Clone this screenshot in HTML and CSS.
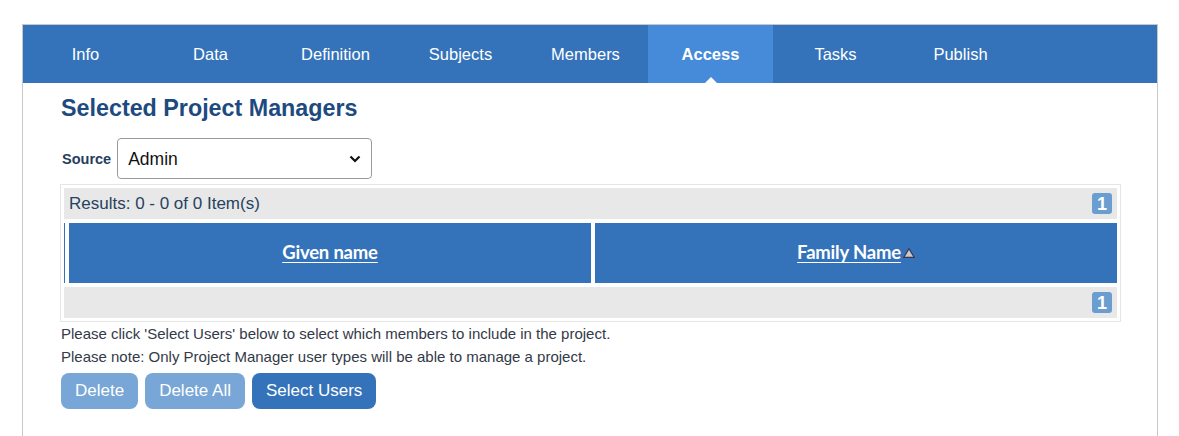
FILE: index.html
```html
<!DOCTYPE html>
<html>
<head>
<meta charset="utf-8">
<link rel="stylesheet" href="styles.css">
</head>
<body>
<div class="panel">
  <nav class="tabs">
    <div class="tab">Info</div>
    <div class="tab">Data</div>
    <div class="tab">Definition</div>
    <div class="tab">Subjects</div>
    <div class="tab">Members</div>
    <div class="tab active">Access</div>
    <div class="tab">Tasks</div>
    <div class="tab">Publish</div>
  </nav>
  <div class="content">
    <h1 class="title">Selected Project Managers</h1>
    <div class="source-row">
      <label class="source-label">Source</label>
      <div class="select-wrap">
        <select class="select"><option>Admin</option></select>
        <svg class="chev" width="12" height="8" viewBox="0 0 12 8"><path d="M1.5 1.5 L6 6 L10.5 1.5" fill="none" stroke="#111" stroke-width="2.2"/></svg>
      </div>
    </div>
    <div class="grid">
      <div class="bar">
        <span class="results">Results: 0 - 0 of 0 Item(s)</span>
        <span class="page">1</span>
      </div>
      <div class="head">
        <div class="head-stub"></div>
        <div class="head-cell"><a class="sort-link">Given name</a></div>
        <div class="head-cell"><a class="sort-link">Family Name</a><svg class="sort-icon" width="12" height="10" viewBox="0 0 12 10"><path d="M6 0.8 L11.2 9.3 L0.8 9.3 Z" fill="#c9c9c9" stroke="#3a3550" stroke-width="1.2"/></svg></div>
      </div>
      <div class="bar bar-end">
        <span class="page">1</span>
      </div>
    </div>
    <p class="note">Please click 'Select Users' below to select which members to include in the project.</p>
    <p class="note">Please note: Only Project Manager user types will be able to manage a project.</p>
    <div class="actions">
      <button class="btn disabled">Delete</button>
      <button class="btn disabled">Delete All</button>
      <button class="btn primary">Select Users</button>
    </div>
  </div>
</div>
</body>
</html>
```
FILE: styles.css
```css
html, body {
  margin: 0;
  padding: 0;
  background: #fff;
}
body {
  font-family: "Liberation Sans", Arial, sans-serif;
  padding: 24px 21px 0 22px;
  height: 436px;
  box-sizing: border-box;
  overflow: hidden;
}
.panel {
  border: 1px solid #c8c8c8;
  border-bottom: none;
  height: 420px;
}
.tabs {
  display: flex;
  height: 58px;
  background: #3473ba;
}
.tab {
  width: 125px;
  display: flex;
  align-items: center;
  justify-content: center;
  color: #fff;
  font-size: 16.5px;
  position: relative;
}
.tab.active {
  background: #468bd9;
  font-weight: bold;
}
.tab.active::after {
  content: "";
  position: absolute;
  bottom: 0;
  left: 50%;
  margin-left: -6px;
  border-left: 6px solid transparent;
  border-right: 6px solid transparent;
  border-bottom: 6px solid #fff;
}
.content {
  padding: 0 36px 0 38px;
}
.title {
  margin: 0;
  padding-top: 12px;
  height: 30px;
  font-size: 23.3px;
  font-weight: bold;
  color: #1d4a7f;
  line-height: 26px;
}
.source-row {
  display: flex;
  align-items: center;
  margin-top: 13px;
  gap: 6px;
  padding-left: 1px;
}
.source-label {
  font-size: 14.5px;
  font-weight: bold;
  color: #263d5e;
}
.select-wrap {
  position: relative;
}
.select {
  appearance: none;
  -webkit-appearance: none;
  width: 255px;
  height: 41px;
  border: 1px solid #9a9a9a;
  border-radius: 4px;
  background: #fff;
  font-family: "Liberation Sans", Arial, sans-serif;
  font-size: 17.5px;
  color: #111;
  padding: 0 10px;
  display: block;
}
.chev {
  position: absolute;
  right: 11px;
  top: 17px;
}
.grid {
  margin-top: 5px;
  margin-left: -1px;
  border: 1px solid #e6e6e6;
  padding: 3px;
  display: flex;
  flex-direction: column;
  gap: 4px;
}
.bar {
  background: #e8e8e8;
  height: 31px;
  display: flex;
  align-items: center;
  justify-content: space-between;
  padding: 0 5px 0 5px;
}
.bar-end {
  justify-content: flex-end;
}
.results {
  font-size: 17px;
  color: #27425f;
}
.page {
  background: #6b9ed0;
  color: #fff;
  font-size: 18px;
  font-weight: bold;
  width: 20px;
  height: 21px;
  border-radius: 3px;
  display: flex;
  align-items: center;
  justify-content: center;
  line-height: 1;
}
.head {
  display: flex;
  height: 60px;
  gap: 4px;
}
.head-stub {
  width: 1px;
  background: #3473ba;
}
.head-cell {
  flex: 1;
  background: #3473ba;
  display: flex;
  align-items: center;
  justify-content: center;
  padding-bottom: 2px;
  box-sizing: border-box;
}
.sort-link {
  font-family: Lato, "Liberation Sans", sans-serif;
  font-weight: bold;
  font-size: 18.5px;
  color: #fff;
  text-decoration: underline;
  text-underline-offset: 3px;
  letter-spacing: -0.2px;
}
.sort-icon {
  margin-left: 2px;
  margin-top: 2px;
}
.note {
  margin: 0;
  font-size: 15px;
  color: #333a48;
  line-height: 23px;
}
.actions {
  display: flex;
  gap: 7px;
  margin-top: 5px;
}
.btn {
  border: none;
  border-radius: 8px;
  height: 36px;
  font-family: "Liberation Sans", Arial, sans-serif;
  font-size: 17px;
  color: #fff;
  padding: 0 14px 0 14px;
}
.btn.disabled {
  background: #78a6d6;
}
.btn.primary {
  background: #3473ba;
}
```
